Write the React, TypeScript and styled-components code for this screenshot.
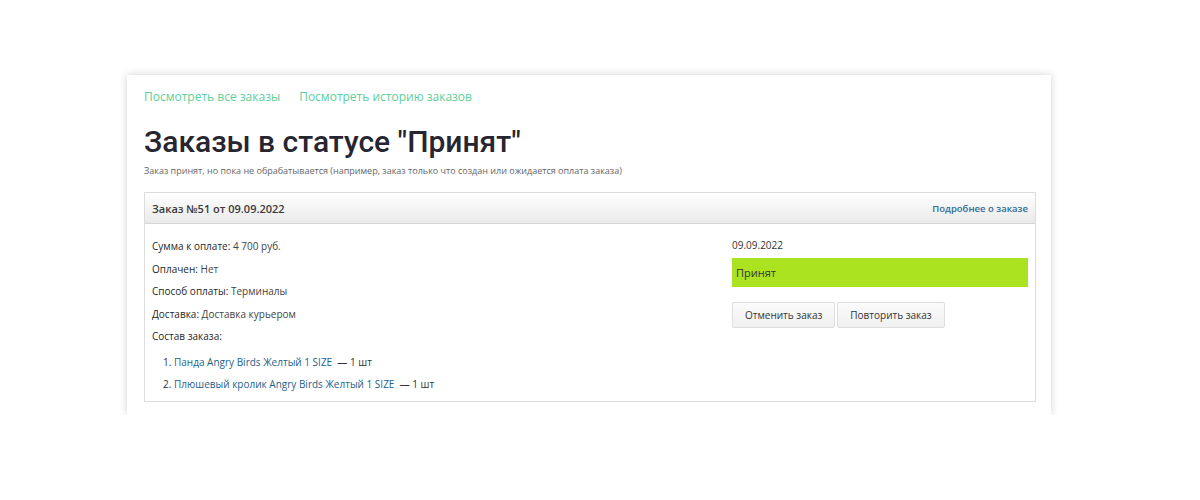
import React from "react";
import styled, { createGlobalStyle } from "styled-components";

const Global = createGlobalStyle`
  html, body { margin: 0; padding: 0; background: #fff; }
  body { font-family: "Open Sans", "Liberation Sans", sans-serif; color: #333; }
`;

const Page = styled.div`
  padding: 75px 0 0 127px;
`;

const Card = styled.div`
  width: 924px;
  box-sizing: border-box;
  background: #fff;
  box-shadow: 0 0 8px rgba(0, 0, 0, 0.18);
  padding: 13px 15px 13px 17px;
`;

const TopLinks = styled.div`
  display: flex;
  gap: 19px;
  font-size: 12px;
  line-height: 17px;
`;

const GreenLink = styled.a`
  color: #5ccf9a;
  text-decoration: none;
`;

const Title = styled.h1`
  margin: 18px 0 0;
  font-family: Roboto, "Liberation Sans", sans-serif;
  font-weight: 500;
  font-size: 30px;
  line-height: 38px;
  color: #27252f;
`;

const Subtitle = styled.p`
  margin: 3px 0 14px;
  font-size: 9px;
  line-height: 14px;
  color: #666;
`;

const Panel = styled.div`
  border: 1px solid #dcdcdc;
`;

const PanelHead = styled.div`
  height: 30px;
  display: flex;
  align-items: center;
  justify-content: space-between;
  padding: 0 7px;
  background: linear-gradient(#ffffff, #e9e9e9);
  border-bottom: 1px solid #d6d6d6;
`;

const HeadTitle = styled.div`
  font-size: 11px;
  font-weight: 600;
  color: #3a3a3a;
`;

const DetailLink = styled.a`
  font-size: 9.5px;
  font-weight: 600;
  color: #2f6d97;
  text-decoration: none;
`;

const PanelBody = styled.div`
  display: grid;
  grid-template-columns: 1fr 296px;
  gap: 20px;
  padding: 14px 7px 3px 7px;
`;

const InfoCol = styled.div`
  font-size: 10px;
  color: #444;
`;

const InfoRow = styled.div`
  line-height: 16px;
  margin-bottom: 6.5px;
`;

const Label = styled.span`
  color: #1f1f1f;
  font-weight: 500;
`;

const Items = styled.ol`
  margin: 10px 0 0;
  padding-left: 22px;
  font-size: 10px;
  line-height: 16px;
  color: #333;
  li { margin-bottom: 6px; }
`;

const ItemLink = styled.a`
  color: #1e5f8a;
  text-decoration: none;
`;

const StatusCol = styled.div`
  font-size: 10px;
`;

const DateLine = styled.div`
  line-height: 16px;
  margin-top: -1px;
`;

const StatusBar = styled.div`
  margin-top: 5px;
  height: 29px;
  display: flex;
  align-items: center;
  padding-left: 4px;
  background: #ace321;
  font-size: 11px;
  color: #333;
`;

const Buttons = styled.div`
  display: flex;
  gap: 2px;
  margin-top: 15px;
`;

const Button = styled.button`
  font-family: "Open Sans", "Liberation Sans", sans-serif;
  font-size: 10px;
  color: #333;
  height: 26px;
  padding: 0 12px;
  border: 1px solid #dedede;
  border-radius: 2px;
  background: linear-gradient(#fbfbfb, #f0f0f0);
`;

export default function App() {
  return (
    <>
      <Global />
      <Page>
        <Card>
          <TopLinks>
            <GreenLink href="#">Посмотреть все заказы</GreenLink>
            <GreenLink href="#">Посмотреть историю заказов</GreenLink>
          </TopLinks>
          <Title>Заказы в статусе "Принят"</Title>
          <Subtitle>
            Заказ принят, но пока не обрабатывается (например, заказ только что создан или ожидается оплата заказа)
          </Subtitle>
          <Panel>
            <PanelHead>
              <HeadTitle>Заказ №51 от 09.09.2022</HeadTitle>
              <DetailLink href="#">Подробнее о заказе</DetailLink>
            </PanelHead>
            <PanelBody>
              <InfoCol>
                <InfoRow><Label>Сумма к оплате:</Label> 4 700 руб.</InfoRow>
                <InfoRow><Label>Оплачен:</Label> Нет</InfoRow>
                <InfoRow><Label>Способ оплаты:</Label> Терминалы</InfoRow>
                <InfoRow><Label>Доставка:</Label> Доставка курьером</InfoRow>
                <InfoRow><Label>Состав заказа:</Label></InfoRow>
                <Items>
                  <li><ItemLink href="#">Панда Angry Birds Желтый 1 SIZE</ItemLink>&nbsp; — 1 шт</li>
                  <li><ItemLink href="#">Плюшевый кролик Angry Birds Желтый 1 SIZE</ItemLink>&nbsp; — 1 шт</li>
                </Items>
              </InfoCol>
              <StatusCol>
                <DateLine>09.09.2022</DateLine>
                <StatusBar>Принят</StatusBar>
                <Buttons>
                  <Button>Отменить заказ</Button>
                  <Button>Повторить заказ</Button>
                </Buttons>
              </StatusCol>
            </PanelBody>
          </Panel>
        </Card>
      </Page>
    </>
  );
}
